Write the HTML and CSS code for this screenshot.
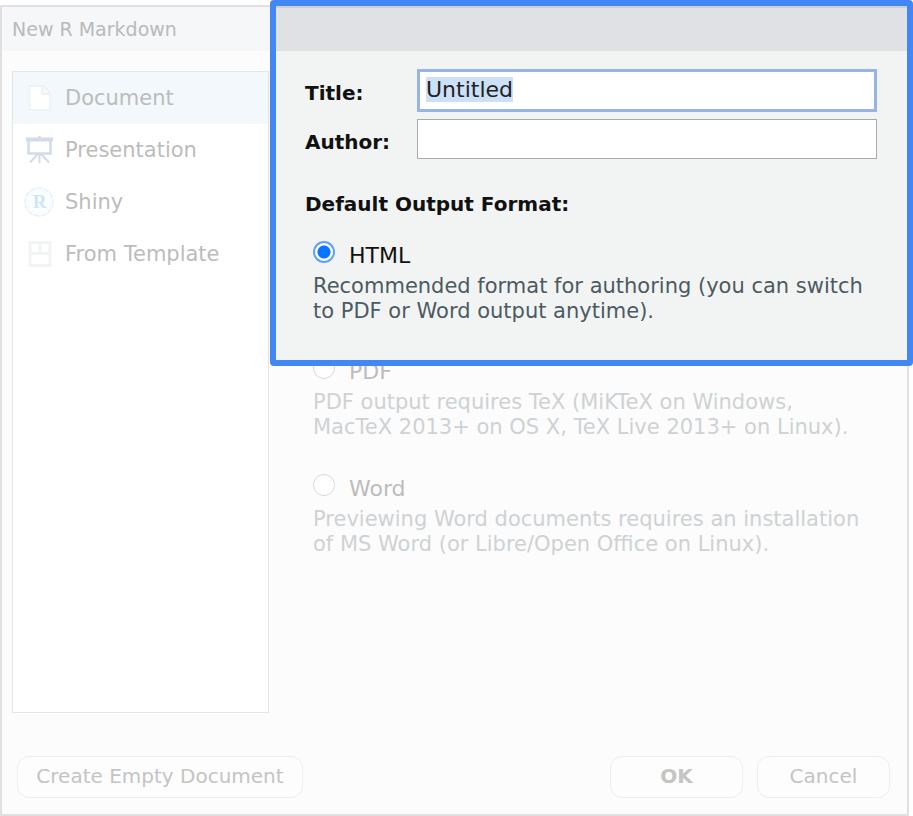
FILE: index.html
```html
<!DOCTYPE html>
<html lang="en">
<head>
<meta charset="utf-8">
<title>New R Markdown</title>
<link rel="stylesheet" href="styles.css">
</head>
<body>
<form class="dialog">
  <div class="columns">
    <div class="side">
      <h1 class="titlebar">New R Markdown</h1>
      <ul class="types">
        <li><button type="button" class="type selected">
          <svg class="icon" viewBox="0 0 30 30"><path d="M5.500 3h14l6.500 7v17H5.500z" fill="#fff" stroke="#edf1f3" stroke-width="1.500"/><path d="M18 3v8h8" fill="#f5f8f9" stroke="#e9eef0" stroke-width="1.500"/></svg>
          Document</button></li>
        <li><button type="button" class="type">
          <svg class="icon" viewBox="0 0 30 30" fill="none" stroke="#d3dbe9"><path d="M2 4.500h27" stroke-width="4"/><path d="M15.500 1v3M4.500 6v12.500h22V6" stroke-width="2.500"/><path d="M15.500 19v9M14 19l-8 8.500M17 19l8 8.500" stroke-width="2"/></svg>
          Presentation</button></li>
        <li><button type="button" class="type">
          <svg class="icon" viewBox="0 0 30 30"><circle cx="15" cy="15" r="14" fill="#fcfeff" stroke="#e7f1f7" stroke-width="1.500" stroke-dasharray="6 1"/><circle cx="15" cy="15" r="11.500" fill="none" stroke="#f3f9fc"/><text x="15.500" y="21" text-anchor="middle" class="icon-letter">R</text></svg>
          Shiny</button></li>
        <li><button type="button" class="type">
          <svg class="icon" viewBox="0 0 30 30" fill="#fff" stroke="#f1f3f4" stroke-width="3"><path d="M6 3.500h20v23H6zM6 14.500h20M16 4v10"/></svg>
          From Template</button></li>
      </ul>
    </div>
    <div class="main">
      <section class="spotlight">
        <div class="spot-bar"></div>
        <div class="spot-body">
          <div class="fields">
            <label for="title">Title:</label>
            <input type="text" id="title" class="field current" value="Untitled" autofocus>
            <label for="author">Author:</label>
            <input type="text" id="author" class="field">
          </div>
          <h2 class="heading">Default Output Format:</h2>
          <div class="option">
            <label class="choice"><input type="radio" name="format" checked>HTML</label>
            <p class="hint">Recommended format for authoring (you can switch<br>to PDF or Word output anytime).</p>
          </div>
        </div>
      </section>
      <section class="others">
        <div class="option">
          <label class="choice"><input type="radio" name="format">PDF</label>
          <p class="hint">PDF output requires TeX (MiKTeX on Windows,<br>MacTeX 2013+ on OS X, TeX Live 2013+ on Linux).</p>
        </div>
        <div class="option">
          <label class="choice"><input type="radio" name="format">Word</label>
          <p class="hint">Previewing Word documents requires an installation<br>of MS Word (or Libre/Open Office on Linux).</p>
        </div>
      </section>
    </div>
  </div>
  <footer class="actions">
    <button type="button" class="btn wide">Create Empty Document</button>
    <button type="submit" class="btn primary">OK</button>
    <button type="button" class="btn">Cancel</button>
  </footer>
</form>
<script src="dialog.js"></script>
</body>
</html>
```
FILE: dialog.js
```js
const title = document.getElementById("title");
title.focus();
title.select();
```
FILE: styles.css
```css
* { box-sizing: border-box; }

body {
  margin: 0;
  padding: 5px 4px 0 0;
  background: #fff;
  font-family: "DejaVu Sans", Verdana, sans-serif;
  font-size: 20px;
  color: #111;
}

.dialog {
  display: flex;
  flex-direction: column;
  min-height: calc(100vh - 5px);
  border: 2px solid #e0e0e0;
  background: #fcfcfc;
}

.columns {
  flex: 1;
  display: grid;
  grid-template-columns: 268px minmax(0, 1fr);
}

.side {
  display: flex;
  flex-direction: column;
}

.titlebar {
  margin: 0;
  padding: 0 10px;
  background: #f6f7f8;
  color: #b9babb;
  font-size: 19px;
  font-weight: 400;
  line-height: 44px;
}

.types {
  flex: 1;
  margin: 20px 1px 0 10px;
  padding: 0;
  list-style: none;
  border: 1px solid #e4e6e6;
  background: #fff;
}

.type {
  display: flex;
  align-items: center;
  gap: 11px;
  width: 100%;
  height: 52px;
  padding: 0 11px;
  border: 0;
  background: none;
  color: #bcbcbc;
  font: inherit;
  font-size: 21px;
}

.type.selected { background: #f2f8fb; }

.icon {
  width: 30px;
  height: 30px;
}

.icon-letter {
  fill: #cbe6f6;
  font: bold 19px "Liberation Serif", serif;
}

.spotlight {
  position: relative;
  z-index: 1;
  margin: -7px -6px 0 0;
  border: 6px solid #4287f5;
  border-radius: 4px;
  background: #f2f4f4;
}

.spot-bar {
  height: 45px;
  border-top: 2px solid #cfcfd1;
  background: #e0e1e5;
}

.spot-body { padding: 18px 30px 36px 29px; }

.fields {
  display: grid;
  grid-template-columns: 100px minmax(0, 1fr);
  column-gap: 12px;
  row-gap: 7px;
  align-items: center;
  font-weight: 700;
}

.fields label { padding-top: 5px; }

.field {
  width: 100%;
  height: 40px;
  padding: 0 8px;
  border: 1px solid #a9abab;
  background: #fff;
  color: #222;
  font: 22px "DejaVu Sans", Verdana, sans-serif;
  outline: none;
}

.field.current {
  height: 43px;
  padding: 0 6px 2px;
  border: 3px solid #98b4e4;
}

.field::selection {
  background: #cce0f8;
  color: #222;
}

.heading {
  margin: 31px 0 22px;
  font-size: 20px;
  line-height: 28px;
}

.option { padding-left: 8px; }

.choice {
  display: flex;
  align-items: center;
  gap: 14px;
  height: 30px;
  font-size: 22px;
}

.choice input {
  appearance: none;
  width: 22px;
  height: 22px;
  margin: 0 0 6px;
  border: 1px solid #d9d9d9;
  border-radius: 50%;
  background: #fff;
}

.choice input:checked {
  border: 2px solid #5c9fff;
  background: radial-gradient(circle, #0875ff 6px, #fff 7px);
}

.hint {
  margin: 4px 0 0;
  color: #4c5a61;
  font-size: 21px;
  line-height: 25px;
  white-space: nowrap;
}

.others {
  margin-top: -10px;
  padding: 0 35px;
  color: #bcbcbc;
}

.others .option + .option { margin-top: 33px; }

.others .hint { color: #ced2d4; }

.actions {
  display: flex;
  gap: 14px;
  padding: 43px 17px 16px 15px;
}

.btn {
  width: 133px;
  height: 42px;
  padding: 0 0 2px;
  border: 1px solid #ededed;
  border-radius: 12px;
  background: #fdfdfd;
  color: #c4c4c4;
  font: inherit;
}

.btn.wide {
  width: 286px;
  margin-right: auto;
}

.btn.primary { font-weight: 700; }
```
